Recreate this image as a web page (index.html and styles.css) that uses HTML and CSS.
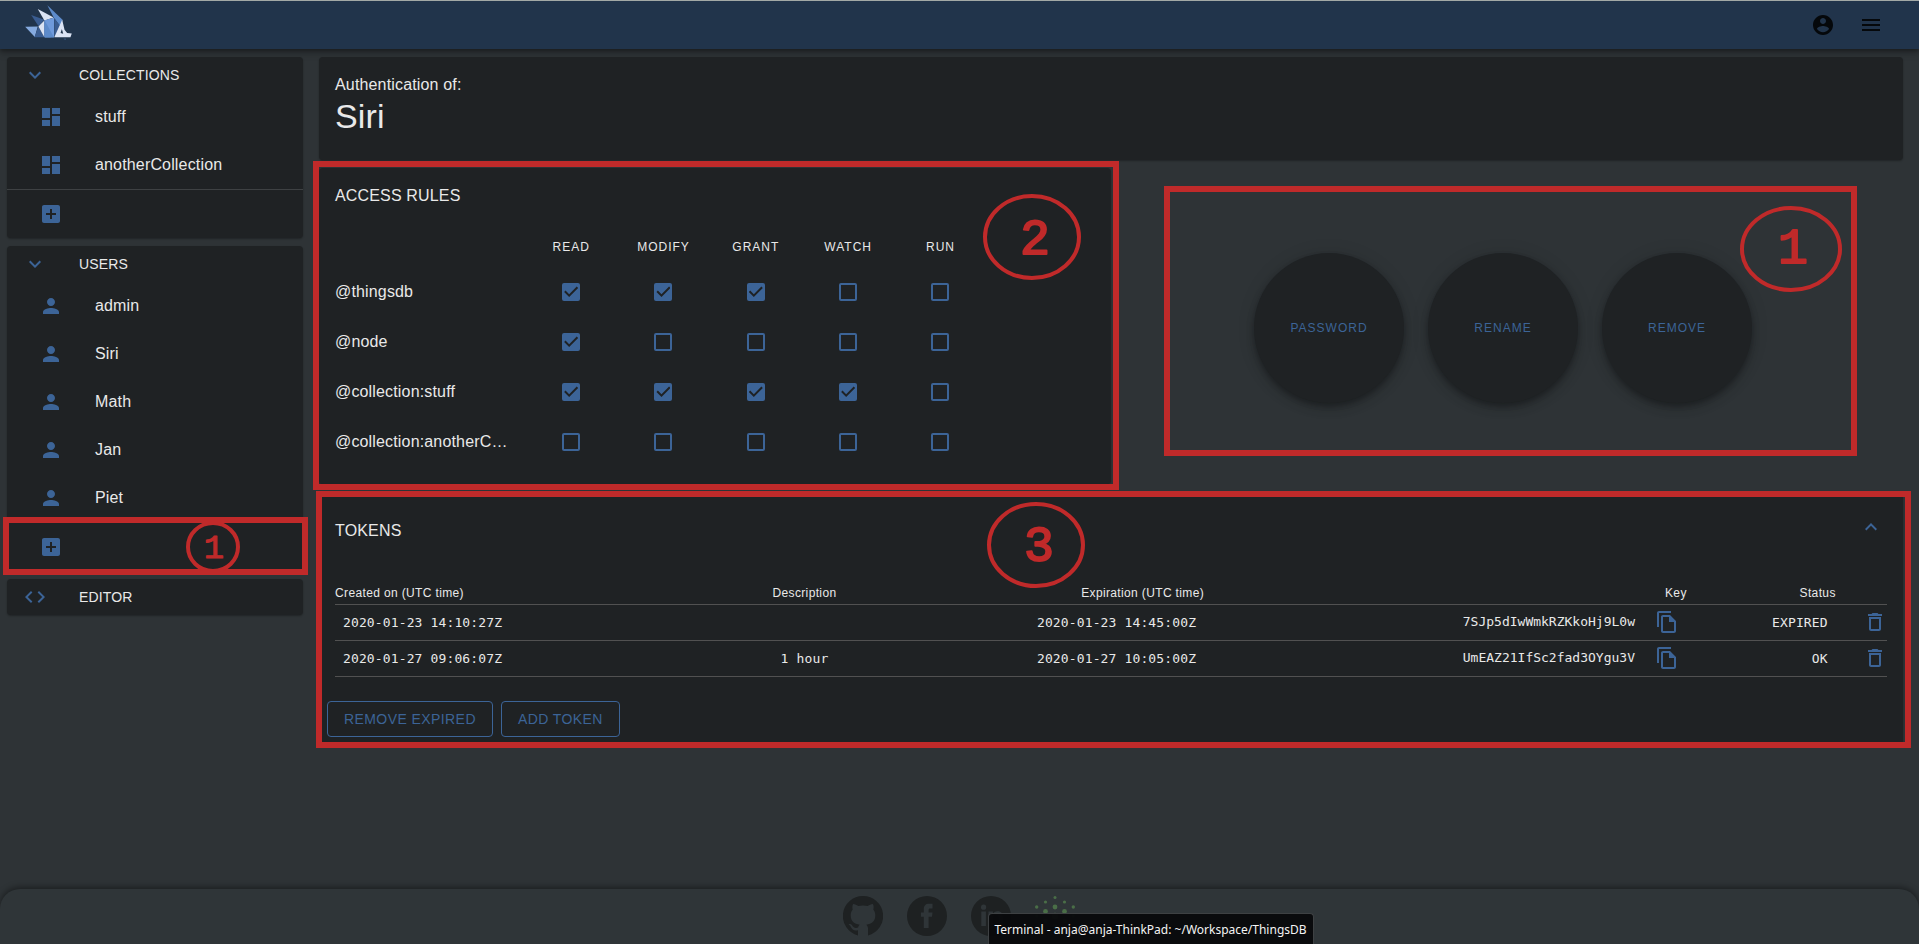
FILE: index.html
```html
<!DOCTYPE html>
<html lang="en">
<head>
<meta charset="utf-8">
<title>ThingsDB - Siri</title>
<link rel="stylesheet" href="styles.css">
</head>
<body>
<svg class="defs" aria-hidden="true">
  <symbol id="i-down" viewBox="0 0 24 24"><path d="M16.59 8.59L12 13.17 7.41 8.59 6 10l6 6 6-6z"/></symbol>
  <symbol id="i-up" viewBox="0 0 24 24"><path d="M12 8l-6 6 1.41 1.41L12 10.83l4.59 4.58L18 14z"/></symbol>
  <symbol id="i-dash" viewBox="0 0 24 24"><path d="M3 13h8V3H3v10zm0 8h8v-6H3v6zm10 0h8V11h-8v10zm0-18v6h8V3h-8z"/></symbol>
  <symbol id="i-add" viewBox="0 0 24 24"><path d="M19 3H5c-1.11 0-2 .9-2 2v14c0 1.1.89 2 2 2h14c1.1 0 2-.9 2-2V5c0-1.1-.9-2-2-2zm-2 10h-4v4h-2v-4H7v-2h4V7h2v4h4v2z"/></symbol>
  <symbol id="i-person" viewBox="0 0 24 24"><path d="M12 12c2.210 0 4-1.790 4-4s-1.790-4-4-4-4 1.790-4 4 1.790 4 4 4zm0 2c-2.670 0-8 1.340-8 4v2h16v-2c0-2.660-5.330-4-8-4z"/></symbol>
  <symbol id="i-code" viewBox="0 0 24 24"><path d="M9.4 16.600L4.800 12l4.600-4.600L8 6l-6 6 6 6 1.400-1.400zm5.200 0l4.600-4.600-4.600-4.600L16 6l6 6-6 6-1.400-1.400z"/></symbol>
  <symbol id="i-copy" viewBox="0 0 24 24"><path d="M16 1H4c-1.100 0-2 .9-2 2v14h2V3h12V1zm-1 4H8c-1.100 0-1.990.9-1.990 2L6 21c0 1.100.89 2 1.990 2H19c1.100 0 2-.9 2-2V11l-6-6zM8 21V7h6v5h5v9H8z"/></symbol>
  <symbol id="i-trash" viewBox="0 0 24 24"><path d="M6 19c0 1.100.9 2 2 2h8c1.100 0 2-.9 2-2V7H6v12zM8 9h8v10H8V9zm7.500-5l-1-1h-5l-1 1H5v2h14V4z"/></symbol>
</svg>

<header class="topbar">
  <a class="logo" href="#" aria-label="ThingsDB">
    <svg viewBox="75 15 141 106" width="47" height="35">
      <path fill="#86abe0" d="M75 81l38-1-9 32z"/>
      <path fill="#3a5c90" d="M93 45l40 15-17 20z"/>
      <path fill="#dbe3f3" d="M113 27l48 26-28 9z"/>
      <path fill="#5d8bcb" d="M142 16l46 44-5 22-21-28z"/>
      <path fill="#3a5c90" d="M115 80l-12 33h30z"/>
      <path fill="#dbe3f3" d="M133 62l-18 18 18 33z"/>
      <path fill="#6f9adb" d="M134 62l28-8-10 59h-18z"/>
      <path fill="#86abe0" d="M134 62l28-8v59z"/>
      <path fill="#5d8bcb" d="M134 62v51h28z"/>
      <path fill="#6f9adb" d="M134 62l28-8v59h-28z"/>
      <path fill="#5d8bcb" d="M134 62l28 51h-28z"/>
      <path fill="#3a5c90" d="M163 54l20 28-20 31z"/>
      <path fill="#dbe3f3" d="M187 60l7 30 8 10 14 1-4 12h-49z"/>
      <path fill="#21344b" d="M186 88l4 14-8-2z"/>
      <path fill="#4a6da2" d="M191 117h8l-3 3z"/>
    </svg>
  </a>
  <div class="top-actions">
    <button class="icon-btn dark" type="button" aria-label="Account"><svg viewBox="0 0 24 24"><path d="M12 2C6.480 2 2 6.480 2 12s4.480 10 10 10 10-4.480 10-10S17.520 2 12 2zm0 3c1.660 0 3 1.340 3 3s-1.340 3-3 3-3-1.340-3-3 1.340-3 3-3zm0 14.200c-2.500 0-4.710-1.280-6-3.220.03-1.990 4-3.080 6-3.080 1.990 0 5.970 1.090 6 3.080-1.290 1.940-3.500 3.220-6 3.220z"/></svg></button>
    <button class="icon-btn dark" type="button" aria-label="Menu"><svg viewBox="0 0 24 24"><path d="M3 18h18v-2H3v2zm0-5h18v-2H3v2zm0-7v2h18V6H3z"/></svg></button>
  </div>
</header>

<div class="layout">
  <nav class="sidebar">
    <section class="card">
      <button class="side-head" type="button"><svg><use href="#i-down"/></svg>COLLECTIONS</button>
      <a class="side-item" href="#"><svg><use href="#i-dash"/></svg>stuff</a>
      <a class="side-item" href="#"><svg><use href="#i-dash"/></svg>anotherCollection</a>
      <div class="side-add"><button class="side-item" type="button" aria-label="Add collection"><svg><use href="#i-add"/></svg></button></div>
    </section>
    <section class="card">
      <button class="side-head" type="button"><svg><use href="#i-down"/></svg>USERS</button>
      <a class="side-item" href="#"><svg><use href="#i-person"/></svg>admin</a>
      <a class="side-item" href="#"><svg><use href="#i-person"/></svg>Siri</a>
      <a class="side-item" href="#"><svg><use href="#i-person"/></svg>Math</a>
      <a class="side-item" href="#"><svg><use href="#i-person"/></svg>Jan</a>
      <a class="side-item" href="#"><svg><use href="#i-person"/></svg>Piet</a>
      <div class="side-add"><button class="side-item" type="button" aria-label="Add user"><svg><use href="#i-add"/></svg></button>
        <div class="frame frame-user"></div>
        <svg class="marker marker-user" viewBox="0 0 54 48"><ellipse cx="27" cy="24" rx="25" ry="24"/><text class="small" x="28" y="35">1</text></svg>
      </div>
    </section>
    <section class="card">
      <button class="side-head" type="button"><svg><use href="#i-code"/></svg>EDITOR</button>
    </section>
  </nav>

  <main class="main">
    <section class="card title-card">
      <p>Authentication of:</p>
      <h1>Siri</h1>
    </section>

    <div class="columns">
      <section class="card access">
        <h2>ACCESS RULES</h2>
        <table class="rules">
          <colgroup><col class="c-label"><col class="c-rule"><col class="c-rule"><col class="c-rule"><col class="c-rule"><col class="c-rule"><col></colgroup>
          <thead><tr><td></td><th>READ</th><th>MODIFY</th><th>GRANT</th><th>WATCH</th><th>RUN</th><td></td></tr></thead>
          <tbody>
            <tr><th>@thingsdb</th><td><input type="checkbox" checked aria-label="@thingsdb read"></td><td><input type="checkbox" checked aria-label="@thingsdb modify"></td><td><input type="checkbox" checked aria-label="@thingsdb grant"></td><td><input type="checkbox" aria-label="@thingsdb watch"></td><td><input type="checkbox" aria-label="@thingsdb run"></td><td></td></tr>
            <tr><th>@node</th><td><input type="checkbox" checked aria-label="@node read"></td><td><input type="checkbox" aria-label="@node modify"></td><td><input type="checkbox" aria-label="@node grant"></td><td><input type="checkbox" aria-label="@node watch"></td><td><input type="checkbox" aria-label="@node run"></td><td></td></tr>
            <tr><th>@collection:stuff</th><td><input type="checkbox" checked aria-label="stuff read"></td><td><input type="checkbox" checked aria-label="stuff modify"></td><td><input type="checkbox" checked aria-label="stuff grant"></td><td><input type="checkbox" checked aria-label="stuff watch"></td><td><input type="checkbox" aria-label="stuff run"></td><td></td></tr>
            <tr><th>@collection:anotherC…</th><td><input type="checkbox" aria-label="anotherCollection read"></td><td><input type="checkbox" aria-label="anotherCollection modify"></td><td><input type="checkbox" aria-label="anotherCollection grant"></td><td><input type="checkbox" aria-label="anotherCollection watch"></td><td><input type="checkbox" aria-label="anotherCollection run"></td><td></td></tr>
          </tbody>
        </table>
        <div class="frame frame-access"></div>
        <svg class="marker marker-access" viewBox="0 0 98 86"><ellipse cx="49" cy="43" rx="47" ry="41"/><text x="52" y="60">2</text></svg>
      </section>

      <section class="actions">
        <button class="fab" type="button">PASSWORD</button>
        <button class="fab" type="button">RENAME</button>
        <button class="fab" type="button">REMOVE</button>
        <div class="frame frame-actions"></div>
        <svg class="marker marker-actions" viewBox="0 0 102 86"><ellipse cx="51" cy="43" rx="49" ry="41"/><text x="53" y="57">1</text></svg>
      </section>
    </div>

    <section class="card tokens">
      <div class="tokens-head">
        <h2>TOKENS</h2>
        <button class="icon-btn" type="button" aria-label="Collapse tokens"><svg><use href="#i-up"/></svg></button>
      </div>
      <table class="token-table">
        <colgroup><col class="t-created"><col class="t-desc"><col class="t-exp"><col class="t-key"><col class="t-status"><col></colgroup>
        <thead><tr><th class="left">Created on (UTC time)</th><th class="mid">Description</th><th>Expiration (UTC time)</th><th>Key</th><th>Status</th><td></td></tr></thead>
        <tbody>
          <tr><td class="left">2020-01-23 14:10:27Z</td><td class="mid"></td><td>2020-01-23 14:45:00Z</td>
            <td class="key-cell"><div class="key"><input type="text" readonly aria-label="Key 1" value="7SJp5dIwWmkRZKkoHj9L0w"><button type="button" aria-label="Copy key"><svg><use href="#i-copy"/></svg></button></div></td>
            <td>EXPIRED</td><td class="del"><button type="button" aria-label="Delete token"><svg><use href="#i-trash"/></svg></button></td></tr>
          <tr><td class="left">2020-01-27 09:06:07Z</td><td class="mid">1 hour</td><td>2020-01-27 10:05:00Z</td>
            <td class="key-cell"><div class="key"><input type="text" readonly aria-label="Key 2" value="UmEAZ21IfSc2fad3OYgu3V"><button type="button" aria-label="Copy key"><svg><use href="#i-copy"/></svg></button></div></td>
            <td>OK</td><td class="del"><button type="button" aria-label="Delete token"><svg><use href="#i-trash"/></svg></button></td></tr>
        </tbody>
      </table>
      <div class="token-buttons">
        <button class="outlined" type="button">REMOVE EXPIRED</button>
        <button class="outlined" type="button">ADD TOKEN</button>
      </div>
      <div class="frame frame-tokens"></div>
      <svg class="marker marker-tokens" viewBox="0 0 98 86"><ellipse cx="49" cy="43" rx="47" ry="41"/><text x="52" y="59">3</text></svg>
    </section>
  </main>
</div>

<footer class="footer">
  <a href="#" aria-label="GitHub"><svg viewBox="0 0 40 40"><path fill-rule="evenodd" d="M20 0a20 20 0 0 0-5 39.400v-5.200c-4 1-6-.8-7.200-3.400-.5-1-1.100-1.700-2-2.300-.5-.5.6-.8 1.500-.4 1.500.6 2.200 2 3.200 3 1.200 1.100 3 1.200 4.600.5.200-1.300.8-2.300 1.600-2.900-5.400-.8-9-3.200-9-9.500 0-2.400.8-4.300 2-5.800-.5-1.600-.5-3.700.4-5.400 2 0 3.700 1 5 2.100 3.200-.7 6.600-.7 9.800 0 1.300-1.100 3-2.100 5-2.100.9 1.700.9 3.800.4 5.400 1.200 1.500 2 3.400 2 5.800 0 6.300-3.600 8.700-9 9.500 1.100.9 1.700 2.300 1.700 4v6.700A20 20 0 0 0 20 0z"/></svg></a>
  <a href="#" aria-label="Facebook"><svg viewBox="0 0 40 40"><path fill-rule="evenodd" d="M20 0a20 20 0 1 0 0 40 20 20 0 0 0 0-40zm5.500 12.600h-2.400c-1.100 0-1.500.6-1.500 1.600v2.200h3.900l-.5 4.300h-3.400V32h-4.800V20.700h-2.900v-4.300h2.900v-3.100c0-3.600 1.700-5.600 5.400-5.600h3.300v4.900z"/></svg></a>
  <a href="#" aria-label="LinkedIn"><svg viewBox="0 0 40 40"><path fill-rule="evenodd" d="M20 0a20 20 0 1 0 0 40 20 20 0 0 0 0-40zM10.300 15.600h4.600V30h-4.600V15.600zM12.600 8.600a2.600 2.600 0 1 1 0 5.200 2.600 2.600 0 0 1 0-5.200zM17.500 15.600h4.400v2c.9-1.500 2.500-2.400 4.600-2.400 4 0 5.500 2.500 5.500 6.500V30h-4.600v-7.500c0-2-.6-3.400-2.400-3.400-2 0-2.900 1.400-2.900 3.500V30h-4.600V15.600z"/></svg></a>
  <a href="#" aria-label="SiriDB"><svg class="dots" viewBox="0 0 40 40"><circle cx="20" cy="1.500" r="1.500"/><circle cx="10.500" cy="6" r="1.600"/><circle cx="29.500" cy="6" r="1.600"/><circle cx="1.700" cy="11" r="1.700"/><circle cx="20" cy="11" r="2.400"/><circle cx="38.300" cy="11" r="1.700"/><circle cx="10.500" cy="15.500" r="2.400"/><circle cx="29.500" cy="15.500" r="2.400"/><circle cx="1.700" cy="20" r="1.700"/><circle cx="20" cy="20" r="3.200"/><circle cx="38.300" cy="20" r="1.700"/><circle cx="10.500" cy="25" r="2.400"/><circle cx="29.500" cy="25" r="2.400"/><circle cx="20" cy="30" r="2.400"/></svg></a>
  <div class="tooltip" role="tooltip">Terminal - anja@anja-ThinkPad: ~/Workspace/ThingsDB</div>
</footer>
</body>
</html>
```

FILE: styles.css
```css
* { box-sizing: border-box; }

:root {
  --bg: #2e3336;
  --card: #1f2224;
  --blue: #3c6497;
  --red: #c02a2a;
  --text: #e9e9e9;
}

body {
  margin: 0;
  min-height: 100vh;
  display: flex;
  flex-direction: column;
  border-top: 1px solid #a3a9a6;
  background: var(--bg);
  color: var(--text);
  font: 16px/24px "Liberation Sans", Arial, sans-serif;
  letter-spacing: .01em;
}

.defs { position: absolute; width: 0; height: 0; }
svg { display: block; fill: currentColor; flex: none; }
h1, h2, p { margin: 0; font-weight: 400; }
a { color: inherit; text-decoration: none; }
button {
  padding: 0;
  border: 0;
  background: none;
  color: var(--blue);
  font: inherit;
  letter-spacing: inherit;
  cursor: pointer;
}

/* Top bar */
.topbar {
  height: 48px;
  padding: 0 24px;
  display: flex;
  align-items: center;
  justify-content: space-between;
  background: #21344b;
  box-shadow: 0 2px 4px rgba(0, 0, 0, .3), 0 4px 8px rgba(0, 0, 0, .2);
}
.logo { height: 40px; padding-left: 1px; }
.top-actions { display: flex; }
.icon-btn {
  width: 48px;
  height: 48px;
  display: grid;
  place-items: center;
}
.icon-btn svg { width: 24px; height: 24px; }
.icon-btn.dark { color: #05080b; }

/* Page grid */
.layout {
  flex: 1;
  display: grid;
  grid-template-columns: 37fr 198fr;
  align-items: start;
  gap: 16px;
  padding: 8px 16px 16px 7px;
}
.sidebar, .main {
  display: flex;
  flex-direction: column;
  gap: 8px;
  min-width: 0;
}
.card {
  position: relative;
  background: var(--card);
  border-radius: 4px;
  box-shadow: 0 1px 2px rgba(0, 0, 0, .3);
}

/* Sidebar */
.side-head, .side-item {
  width: 100%;
  display: flex;
  align-items: center;
  text-align: left;
}
.side-head {
  height: 36px;
  padding: 0 16px;
  gap: 32px;
  color: var(--text);
  font-size: 14px;
}
.side-item {
  height: 48px;
  padding: 0 32px;
  gap: 32px;
}
.side-head svg, .side-item svg { width: 24px; height: 24px; color: var(--blue); }
.side-add { position: relative; border-top: 1px solid #3e4143; }

/* Title card */
.title-card { padding: 16px 16px 24px; }
.title-card h1 { font-size: 34px; line-height: 39px; }

/* Access rules and actions */
.columns { display: grid; grid-template-columns: 1fr 1fr; }
h2 { font-size: 16px; }
.access { padding: 16px 16px 17px; }
.rules {
  width: 100%;
  margin-top: 16px;
  table-layout: fixed;
  border-collapse: collapse;
}
.c-label { width: 25%; }
.c-rule { width: 12.15%; }
.rules td, .rules th { padding: 0; font-weight: 400; text-align: center; }
.rules thead th {
  height: 43px;
  padding-top: 2px;
  font-size: 12px;
  letter-spacing: 1px;
}
.rules tbody th {
  height: 50px;
  text-align: left;
  white-space: nowrap;
}
.rules input {
  appearance: none;
  display: block;
  width: 18px;
  height: 18px;
  margin: 0 auto;
  border: 2px solid var(--blue);
  border-radius: 2px;
}
.rules input:checked {
  background: var(--blue);
  display: grid;
  place-items: center;
}
.rules input:checked::before {
  content: "";
  width: 14px;
  height: 14px;
  background: var(--card);
  clip-path: path("M5 12L0 7l1.400-1.400L5 9.200l7.600-7.600L14 3z");
}
.actions {
  position: relative;
  display: flex;
  justify-content: center;
  align-items: center;
  gap: 24px;
  padding: 3px 8px 0 0;
}
.fab {
  width: 150px;
  height: 150px;
  border-radius: 50%;
  background: var(--card);
  font-size: 12px;
  letter-spacing: 1px;
  box-shadow: 0 3px 5px rgba(0, 0, 0, .2), 0 6px 10px rgba(0, 0, 0, .14), 0 1px 18px rgba(0, 0, 0, .12);
}

/* Tokens */
.tokens { padding: 11px 8px 7px; }
.tokens-head {
  display: flex;
  align-items: center;
  justify-content: space-between;
  padding-left: 8px;
}
.tokens-head h2 { padding-top: 8px; }
.token-table {
  width: calc(100% - 16px);
  margin: 29px 8px 24px;
  table-layout: fixed;
  border-collapse: collapse;
}
.t-created { width: 20%; }
.t-desc { width: 20.5%; }
.t-exp { width: 15.5%; }
.t-key { width: 31.1%; }
.t-status { width: 9.6%; }
.token-table tr { border-bottom: 1px solid #515151; }
.token-table th {
  height: 24px;
  padding: 2px 0 0;
  font-size: 12px;
  font-weight: 400;
  line-height: 20px;
  letter-spacing: .03em;
  text-align: right;
}
.token-table tbody td {
  height: 36px;
  padding: 2px 8px 0;
  font-family: "DejaVu Sans Mono", monospace;
  font-size: 13px;
  letter-spacing: .01em;
  text-align: right;
}
.token-table .left { text-align: left; }
.token-table .mid { text-align: center; }
.token-table tbody .key-cell { padding: 0 8px; }
.token-table tbody .del { padding: 0; }
.token-table svg { width: 24px; height: 24px; }
.token-table button { display: block; margin-left: auto; }
.key { display: flex; justify-content: flex-end; align-items: center; gap: 16px; }
.key input {
  width: 176px;
  padding: 0;
  border: 0;
  background: none;
  color: inherit;
  font: 13px/20px "DejaVu Sans Mono", monospace;
  outline: 0;
}
.token-table .key button { margin: 0; }
.token-buttons { display: flex; gap: 8px; }
.outlined {
  height: 36px;
  padding: 0 16px;
  border: 1px solid var(--blue);
  border-radius: 4px;
  font-size: 14px;
  letter-spacing: .03em;
}

/* Annotations lying over the page */
.frame {
  position: absolute;
  z-index: 2;
  border: 6px solid var(--red);
  pointer-events: none;
}
.frame-user { inset: -6px -5px -4px -4px; }
.frame-access { inset: -7px -8px -6px -6px; }
.frame-actions { inset: 18px 46px 28px 53px; }
.frame-tokens { inset: -1px -8px -4px -3px; }
.marker {
  position: absolute;
  z-index: 3;
  width: 98px;
  height: 86px;
  pointer-events: none;
}
.marker ellipse { fill: none; stroke: var(--red); stroke-width: 4; }
.marker text {
  fill: var(--red);
  stroke: var(--red);
  stroke-width: 2;
  stroke-linejoin: round;
  font: 50px "Liberation Mono", monospace;
  text-anchor: middle;
}
.marker .small { font-size: 34px; stroke-width: 1; }
.marker-user { width: 54px; height: 48px; right: 63px; top: 0; }
.marker-access { right: 30px; top: 26px; }
.marker-actions { width: 102px; right: 61px; top: 38px; }
.marker-tokens { left: calc(42% + 3px); top: 10px; }

/* Footer */
.footer {
  position: relative;
  height: 55px;
  padding: 7px 2px 0 0;
  display: flex;
  justify-content: center;
  gap: 24px;
  border-radius: 20px 20px 0 0;
  background: #2f3538;
  color: #1e2122;
  box-shadow: 0 -2px 6px rgba(0, 0, 0, .4);
}
.footer svg { width: 40px; height: 40px; }
.footer .dots { color: #4a6e47; }
.tooltip {
  position: absolute;
  left: calc(50% + 28px);
  bottom: 0;
  height: 31px;
  padding: 5px 6px;
  border: 1px solid #3e4143;
  border-bottom: 0;
  border-radius: 4px 4px 0 0;
  background: rgba(8, 9, 11, .96);
  color: #f4f4f4;
  font: 12px/22px "Noto Sans", sans-serif;
  letter-spacing: normal;
  white-space: nowrap;
}
```
